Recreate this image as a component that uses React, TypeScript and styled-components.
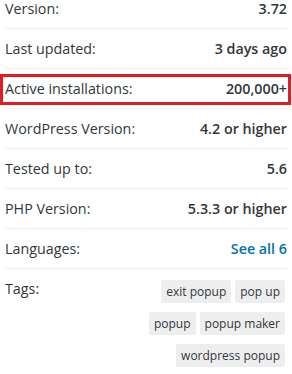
import React from "react";
import styled, { createGlobalStyle } from "styled-components";

const GlobalStyle = createGlobalStyle`
  html, body {
    margin: 0;
    padding: 0;
    background: #ffffff;
  }
  body {
    font-family: "Open Sans", "Noto Sans", sans-serif;
    color: #32373c;
    overflow: hidden;
  }
`;

const MetaList = styled.ul`
  list-style: none;
  margin: -11px 5px 0 5px;
  padding: 0;
  width: 282px;
`;

const MetaRow = styled.li<{ $highlight?: boolean; $last?: boolean }>`
  position: relative;
  display: flex;
  justify-content: space-between;
  align-items: flex-start;
  padding: 10px 0;
  font-size: 14.3px;
  line-height: 19px;
  border-bottom: ${(p) => (p.$last ? "none" : "1px solid #eeeeee")};

  ${(p) =>
    p.$highlight &&
    `
    &::after {
      content: "";
      position: absolute;
      top: 5px;
      bottom: 3px;
      left: -5px;
      right: -4px;
      border: 3px solid #e31b25;
      pointer-events: none;
    }
  `}
`;

const Label = styled.span`
  color: #32373c;
  font-weight: 400;
`;

const Value = styled.strong`
  color: #32373c;
  font-weight: 600;
`;

const ValueLink = styled.a`
  color: #0073aa;
  font-weight: 600;
  text-decoration: none;
`;

const TagCloud = styled.div`
  display: flex;
  flex-wrap: wrap;
  justify-content: flex-end;
  column-gap: 4px;
  row-gap: 9px;
  width: 155px;
  margin-top: 1px;
  padding-right: 2px;
`;

const Tag = styled.a`
  display: inline-block;
  background: #eeeeee;
  color: #32373c;
  font-size: 12px;
  line-height: 17px;
  padding: 3px 5px;
  border-radius: 2px;
  text-decoration: none;
  white-space: nowrap;
`;

const rows: { label: string; value: string; highlight?: boolean }[] = [
  { label: "Version:", value: "3.72" },
  { label: "Last updated:", value: "3 days ago" },
  { label: "Active installations:", value: "200,000+", highlight: true },
  { label: "WordPress Version:", value: "4.2 or higher" },
  { label: "Tested up to:", value: "5.6" },
  { label: "PHP Version:", value: "5.3.3 or higher" },
];

const tags = ["exit popup", "pop up", "popup", "popup maker", "wordpress popup"];

export default function App() {
  return (
    <>
      <GlobalStyle />
      <MetaList>
        {rows.map((r) => (
          <MetaRow key={r.label} $highlight={r.highlight}>
            <Label>{r.label}</Label>
            <Value>{r.value}</Value>
          </MetaRow>
        ))}
        <MetaRow>
          <Label>Languages:</Label>
          <ValueLink href="#">See all 6</ValueLink>
        </MetaRow>
        <MetaRow $last>
          <Label>Tags:</Label>
          <TagCloud>
            {tags.map((t) => (
              <Tag key={t} href="#">
                {t}
              </Tag>
            ))}
          </TagCloud>
        </MetaRow>
      </MetaList>
    </>
  );
}
